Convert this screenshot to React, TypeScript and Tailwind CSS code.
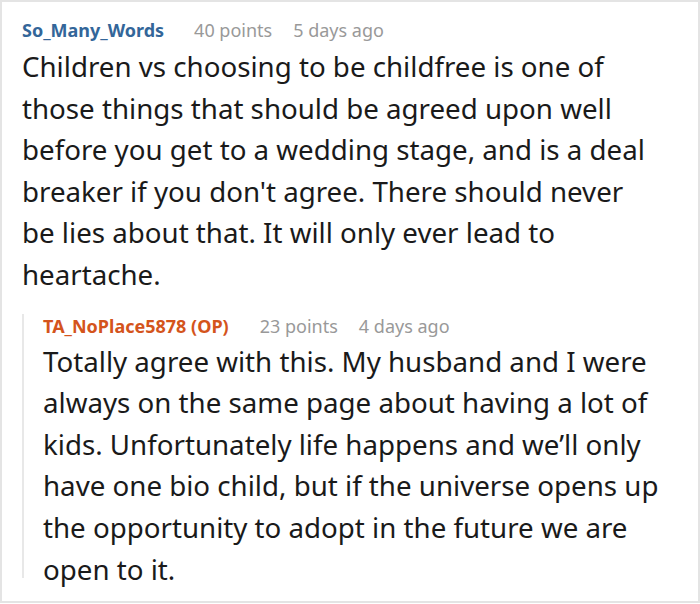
import React from 'react';

export default function App() {
  return (
    <div className="w-[700px] h-[604px] bg-white" style={{ fontFamily: '"Noto Sans", sans-serif' }}>
      <div className="h-[603px] border-2 border-[#e4e4e4] pl-[20px] pr-[37px] pt-[16px]">
        {/* Parent comment */}
        <div className="flex items-baseline text-[18px] leading-[24px]">
          <span className="font-bold text-[#336699]">So_Many_Words</span>
          <span className="ml-[30px] text-[#999999]">40 points</span>
          <span className="ml-[21px] text-[#999999]">5 days ago</span>
        </div>
        <p className="text-[27.7px] leading-[41.6px] text-[#1a1a1a] mt-[4px]">
          Children vs choosing to be childfree is one of those things that should be agreed upon well before you get to a wedding stage, and is a deal breaker if you don't agree. There should never be lies about that. It will only ever lead to heartache.
        </p>

        {/* Reply */}
        <div className="mt-[26px] h-[264px] border-l-2 border-[#e8e8e8] pl-[19px]">
          <div className="-mt-[8px] flex items-baseline text-[18px] leading-[24px]">
            <span className="font-bold text-[#d4541c]">TA_NoPlace5878 (OP)</span>
            <span className="ml-[31px] text-[#999999]">23 points</span>
            <span className="ml-[21px] text-[#999999]">4 days ago</span>
          </div>
          <p className="text-[27.7px] leading-[41.6px] text-[#1a1a1a] mt-[3px]">
            Totally agree with this. My husband and I were always on the same page about having a lot of kids. Unfortunately life happens and we’ll only have one bio child, but if the universe opens up the opportunity to adopt in the future we are open to it.
          </p>
        </div>
      </div>
    </div>
  );
}
